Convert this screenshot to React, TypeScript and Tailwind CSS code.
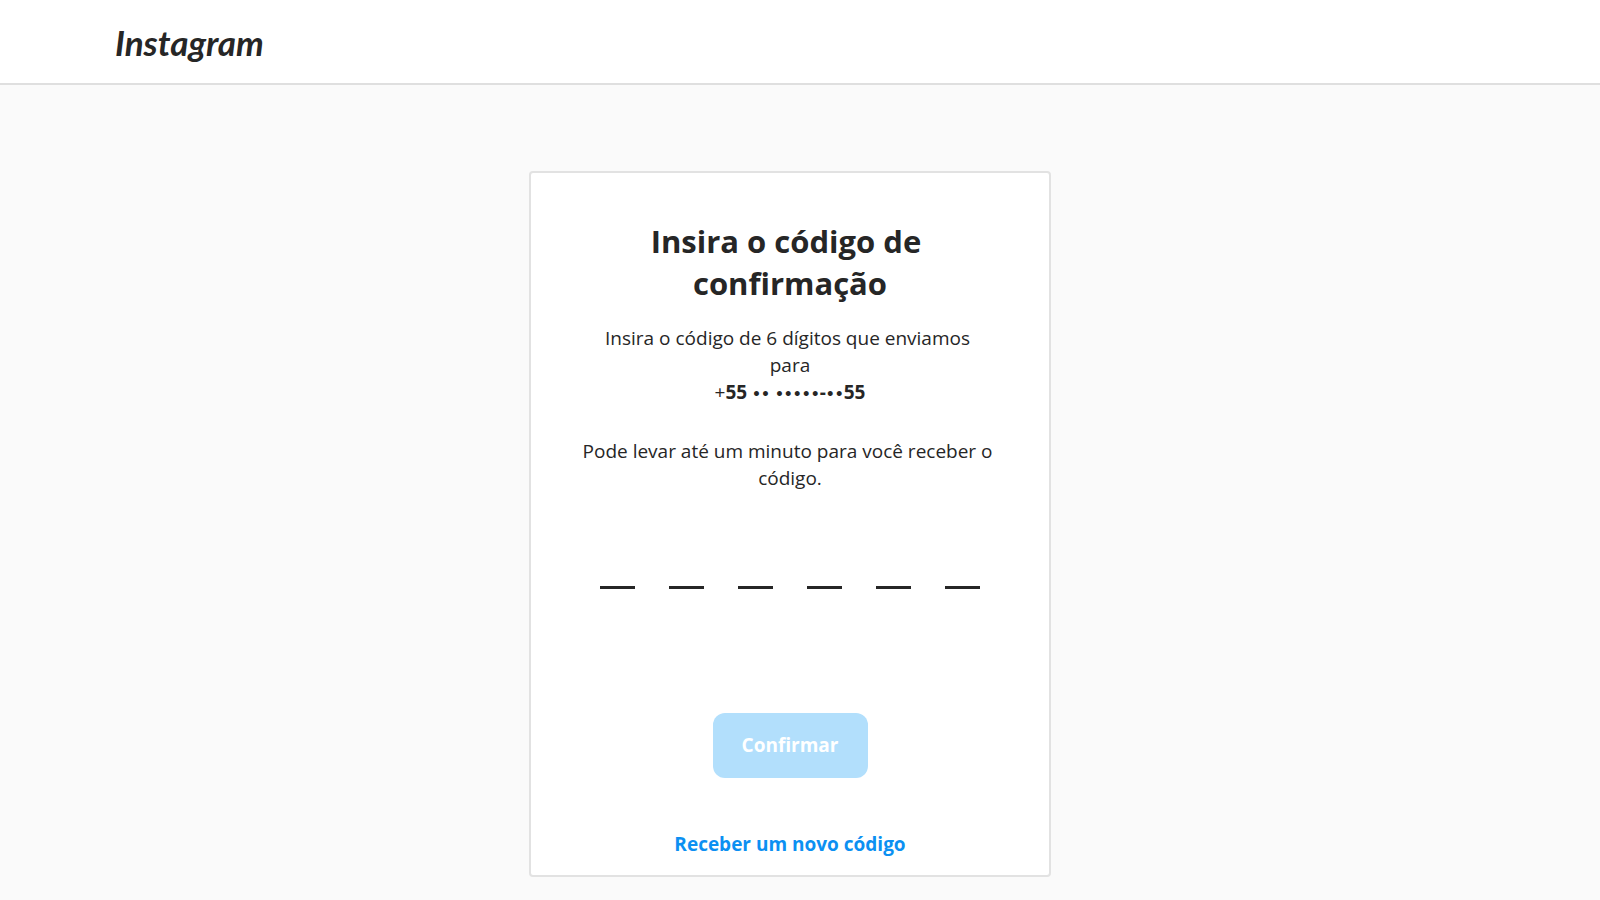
const digits = [1, 2, 3, 4, 5, 6];

function Header() {
  return (
    <header className="h-[85px] border-b-2 border-[#dfdfdf] bg-white pl-[115px]">
      <a
        href="#"
        className="inline-block pt-4 font-['Lato',sans-serif] text-[35px] leading-[52px] font-bold text-[#262626] italic"
      >
        Instagram
      </a>
    </header>
  );
}

function Mask({ length }: { length: number }) {
  return (
    <span className="font-['DejaVu_Sans',sans-serif] text-[14px] leading-none font-bold">{"•".repeat(length)}</span>
  );
}

function ConfirmationCard() {
  return (
    <form className="flex w-[522px] flex-col items-center rounded border-2 border-[#e2e2e2] bg-white pt-[47px] pb-[17px] text-center text-[19px] leading-[27px]">
      <h1 className="text-[31px] leading-[42px] font-bold">
        Insira o código de&nbsp;
        <br />
        confirmação
      </h1>
      <p className="mt-[21px]">
        Insira o código de 6 dígitos que enviamos&nbsp;
        <br />
        para
        <br />
        +
        <strong>
          55 <Mask length={2} /> <Mask length={5} />-<Mask length={2} />
          55
        </strong>
      </p>
      <p className="mt-8">
        Pode levar até um minuto para você receber o&nbsp;
        <br />
        código.
      </p>
      <div role="group" aria-label="Código de confirmação" className="mt-[52px] flex gap-[34px]">
        {digits.map((digit) => (
          <input
            key={digit}
            type="text"
            inputMode="numeric"
            maxLength={1}
            aria-label={`Dígito ${digit}`}
            className="h-[45px] w-[35px] border-b-3 border-[#262626] bg-transparent text-center outline-none"
          />
        ))}
      </div>
      <button
        type="submit"
        disabled
        className="mt-[124px] h-[65px] w-[155px] rounded-xl bg-[#b2dffc] font-bold text-white"
      >
        Confirmar
      </button>
      <a href="#" className="mt-[53px] font-bold text-[#0c90f2]">
        Receber um novo código
      </a>
    </form>
  );
}

export default function App() {
  return (
    <div className="min-h-screen bg-[#fafafa] font-['Open_Sans','Noto_Sans',sans-serif] text-[#262626]">
      <Header />
      <main className="flex justify-center pt-[86px] pr-5 pb-6">
        <ConfirmationCard />
      </main>
    </div>
  );
}
